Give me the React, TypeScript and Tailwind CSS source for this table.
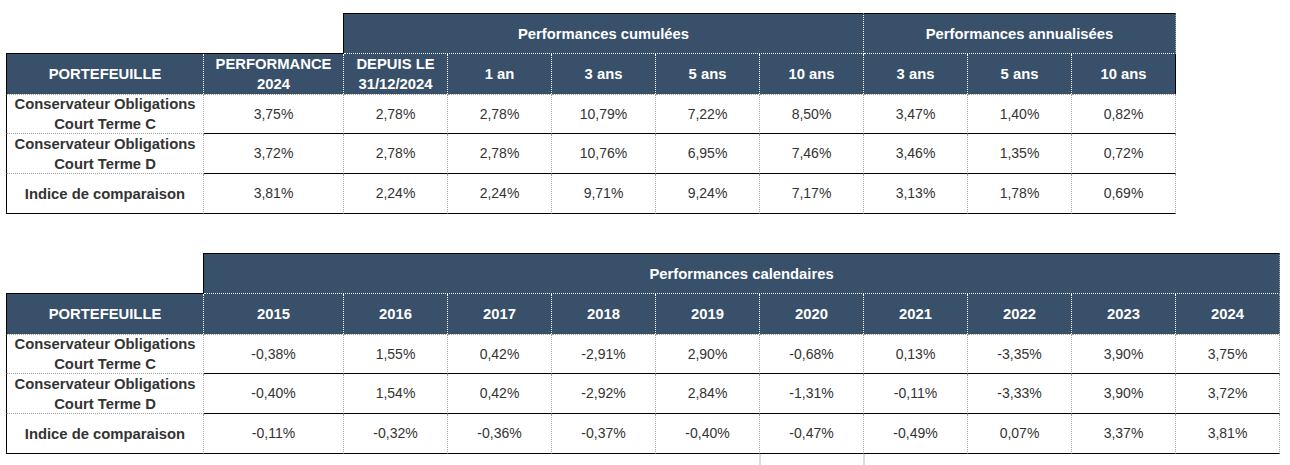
import React from "react";

const RD = "[border-right:1px_dotted_#a0a0a0]";
const RW = "[border-right:1px_dotted_#ffffff]";
const RB = "[border-right:1px_solid_#000000]";
const LB = "[border-left:1px_solid_#000000]";
const TB = "[border-top:1px_solid_#000000]";
const TD = "[border-top:1px_dotted_#a0a0a0]";
const BB = "[border-bottom:1px_solid_#000000]";
const BD = "[border-bottom:1px_dotted_#a0a0a0]";
const BW = "[border-bottom:1px_dotted_#ffffff]";

const HEAD = "bg-[#38506a] text-white font-bold text-[14.8px] leading-[20px]";
const DATA = "text-[#333333] text-[14px]";
const LABEL = "text-[#333333] font-bold text-[14.8px] leading-[20px]";
const CELL = "flex items-center justify-center text-center";

type Row = { label: React.ReactNode; values: string[] };

function DataRows({ rows }: { rows: Row[] }) {
  return (
    <>
      {rows.map((r, i) => {
        const first = i === 0;
        const last = i === rows.length - 1;
        return (
          <React.Fragment key={i}>
            <div className={`${CELL} ${LABEL} ${LB} ${RD} ${first ? TD : ""} ${last ? BB : BD}`}>{r.label}</div>
            {r.values.map((v, j) => (
              <div key={j} className={`${CELL} ${DATA} ${RD} ${first ? TD : ""} ${BB}`}>
                {v}
              </div>
            ))}
          </React.Fragment>
        );
      })}
    </>
  );
}

const labelC = (
  <span>
    Conservateur Obligations
    <br />
    Court Terme C
  </span>
);
const labelD = (
  <span>
    Conservateur Obligations
    <br />
    Court Terme D
  </span>
);

const topRows: Row[] = [
  { label: labelC, values: ["3,75%", "2,78%", "2,78%", "10,79%", "7,22%", "8,50%", "3,47%", "1,40%", "0,82%"] },
  { label: labelD, values: ["3,72%", "2,78%", "2,78%", "10,76%", "6,95%", "7,46%", "3,46%", "1,35%", "0,72%"] },
  { label: "Indice de comparaison", values: ["3,81%", "2,24%", "2,24%", "9,71%", "9,24%", "7,17%", "3,13%", "1,78%", "0,69%"] },
];

const bottomRows: Row[] = [
  { label: labelC, values: ["-0,38%", "1,55%", "0,42%", "-2,91%", "2,90%", "-0,68%", "0,13%", "-3,35%", "3,90%", "3,75%"] },
  { label: labelD, values: ["-0,40%", "1,54%", "0,42%", "-2,92%", "2,84%", "-1,31%", "-0,11%", "-3,33%", "3,90%", "3,72%"] },
  { label: "Indice de comparaison", values: ["-0,11%", "-0,32%", "-0,36%", "-0,37%", "-0,40%", "-0,47%", "-0,49%", "0,07%", "3,37%", "3,81%"] },
];

const topSub = ["1 an", "3 ans", "5 ans", "10 ans", "3 ans", "5 ans"];
const years = ["2016", "2017", "2018", "2019", "2020", "2021", "2022", "2023"];

export default function App() {
  return (
    <div className="bg-white w-[1290px] h-[465px] overflow-hidden pt-[13px] pl-[6px]" style={{ fontFamily: '"Liberation Sans", Arial, sans-serif' }}>
      {/* Top table */}
      <div className="grid grid-cols-[198px_140px_repeat(8,104px)] grid-rows-[41px_40px_40px_40px_40px] w-max">
        <div className={`col-span-2 ${RB} ${BB}`} />
        <div className={`col-span-5 ${CELL} ${HEAD} ${TB} ${RW} ${BW}`}>Performances cumulées</div>
        <div className={`col-span-3 ${CELL} ${HEAD} ${TB} ${RD} ${BW}`}>Performances annualisées</div>

        <div className={`${CELL} ${HEAD} ${LB} ${RW}`}>PORTEFEUILLE</div>
        <div className={`${CELL} ${HEAD} ${RW}`}>
          <span>
            PERFORMANCE
            <br />
            2024
          </span>
        </div>
        <div className={`${CELL} ${HEAD} ${RW}`}>
          <span>
            DEPUIS LE
            <br />
            31/12/2024
          </span>
        </div>
        {topSub.map((s, i) => (
          <div key={i} className={`${CELL} ${HEAD} ${RW}`}>
            {s}
          </div>
        ))}
        <div className={`${CELL} ${HEAD} ${RB}`}>10 ans</div>

        <DataRows rows={topRows} />
      </div>

      <div className="h-[39px]" />

      {/* Bottom table */}
      <div className="grid grid-cols-[198px_140px_repeat(9,104px)] grid-rows-[41px_40px_40px_40px_40px] w-max">
        <div className={`${RB} ${BB}`} />
        <div className={`col-span-10 ${CELL} ${HEAD} ${TB} ${RD} ${BW}`}>Performances calendaires</div>

        <div className={`${CELL} ${HEAD} ${LB} ${RW}`}>PORTEFEUILLE</div>
        <div className={`${CELL} ${HEAD} ${RW}`}>2015</div>
        {years.map((y) => (
          <div key={y} className={`${CELL} ${HEAD} ${RW}`}>
            {y}
          </div>
        ))}
        <div className={`${CELL} ${HEAD} ${RD}`}>2024</div>

        <DataRows rows={bottomRows} />
      </div>

      <div className="flex h-[12px]">
        <div className="w-[753px]" />
        <div className="w-[2px] bg-[#dcdcdc]" />
        <div className="w-[102px]" />
        <div className="w-[2px] bg-[#dcdcdc]" />
      </div>
    </div>
  );
}
